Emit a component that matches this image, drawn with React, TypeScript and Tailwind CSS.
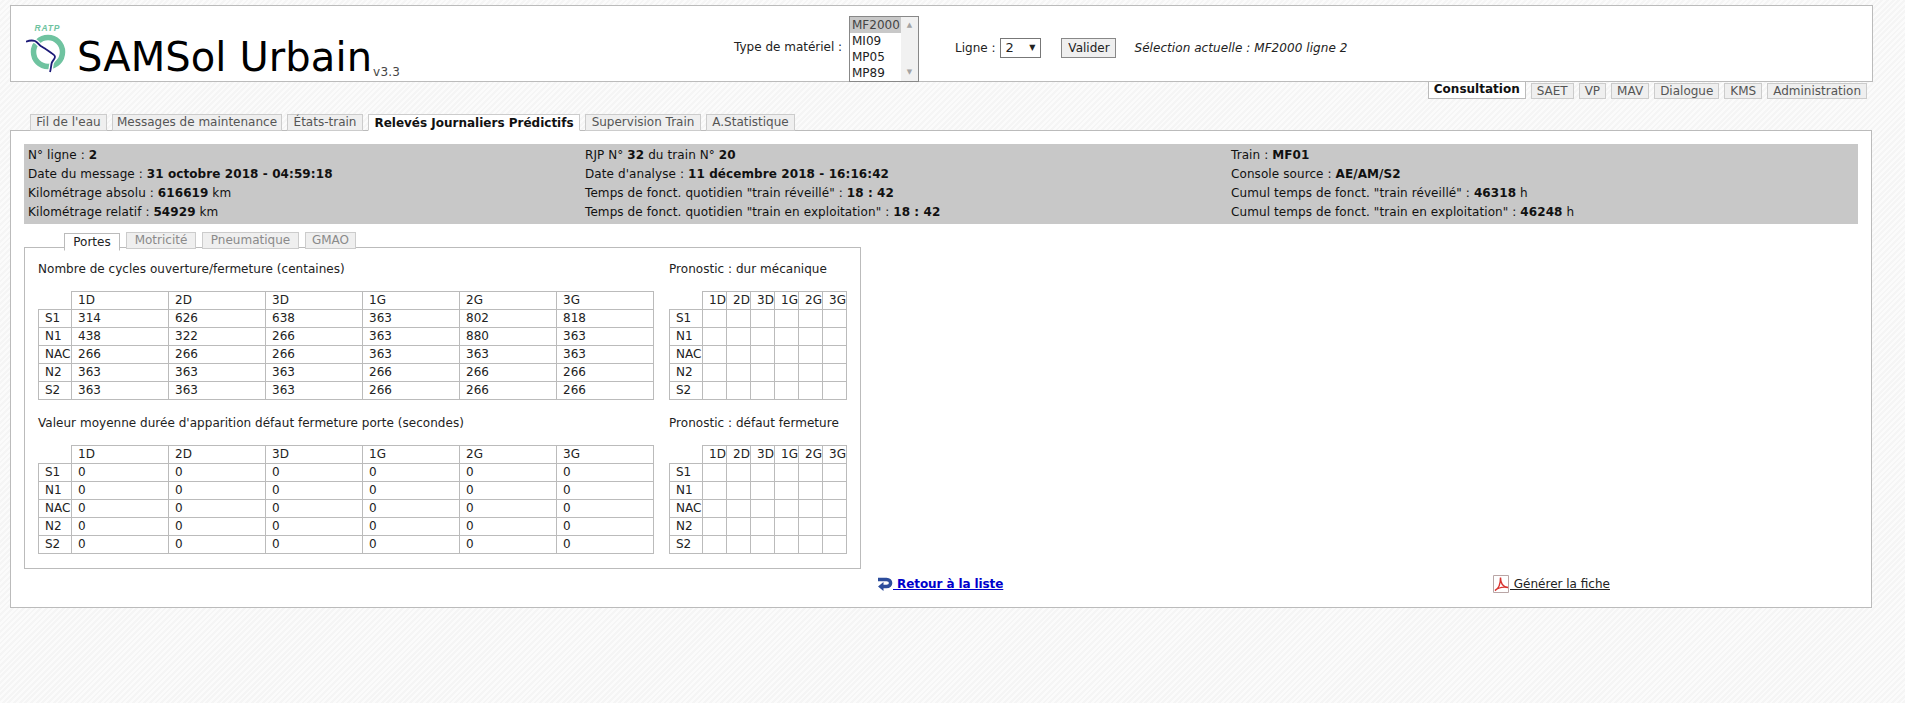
import type { ReactNode } from 'react'

const cols = ['1D', '2D', '3D', '1G', '2G', '3G']
const rows = ['S1', 'N1', 'NAC', 'N2', 'S2']

const cycles = [
  ['314', '626', '638', '363', '802', '818'],
  ['438', '322', '266', '363', '880', '363'],
  ['266', '266', '266', '363', '363', '363'],
  ['363', '363', '363', '266', '266', '266'],
  ['363', '363', '363', '266', '266', '266'],
]
const zeros = rows.map(() => cols.map(() => '0'))
const empty = rows.map(() => cols.map(() => ''))

const topTabs = ['SAET', 'VP', 'MAV', 'Dialogue', 'KMS', 'Administration']

function GridTable({ data, colWidth }: { data: string[][]; colWidth: 'wide' | 'narrow' }) {
  const cellWidth = colWidth === 'wide' ? 'w-[97px]' : 'w-[24px]'
  return (
    <table className={`table-fixed border-collapse ${colWidth === 'wide' ? 'w-[615px]' : 'w-[177px]'}`}>
      <thead>
        <tr className="h-[18px]">
          <th className="w-[33px] p-0" />
          {cols.map((c) => (
            <th key={c} className={`${cellWidth} border border-[#bbb] pl-[6px] py-0 pr-0 text-left font-normal leading-[17px] overflow-visible whitespace-nowrap`}>
              {c}
            </th>
          ))}
        </tr>
      </thead>
      <tbody>
        {rows.map((r, i) => (
          <tr key={r} className="h-[18px]">
            <td className="border border-[#bbb] pl-[6px] py-0 pr-0 leading-[17px] whitespace-nowrap">{r}</td>
            {data[i].map((v, j) => (
              <td key={j} className="border border-[#bbb] pl-[6px] py-0 pr-0 leading-[17px]">
                {v}
              </td>
            ))}
          </tr>
        ))}
      </tbody>
    </table>
  )
}

function Section({ title, children }: { title: string; children: ReactNode }) {
  return (
    <div>
      <div className="h-[18px] leading-[20px] mb-[14px] whitespace-nowrap tracking-[0.03px]">{title}</div>
      {children}
    </div>
  )
}

function RatpLogo() {
  return (
    <svg width="42" height="50" viewBox="0 0 42 50" className="shrink-0">
      <text x="8.5" y="7" fontFamily="'Liberation Sans', sans-serif" fontSize="8.5" fontWeight="700" fontStyle="italic" fill="#6fc3a0" letterSpacing="0.8">
        RATP
      </text>
      <circle cx="22" cy="28" r="14.5" fill="none" stroke="#6fc3a0" strokeWidth="5.5" />
      <path
        d="M0 17.7 C3 16.5 6 16 9 17 C12 18.5 13 21 14.7 22 C17 23.5 18 24 20 25.3 C22 26.5 24 28 25.7 29.3 C27.5 30.5 29 31 29 32.7 C29 35 26.5 36.5 25.7 39 C25 42 25 45 24 48"
        fill="none"
        stroke="#fff"
        strokeWidth="4.5"
      />
      <path
        d="M0 17.7 C3 16.5 6 16 9 17 C12 18.5 13 21 14.7 22 C17 23.5 18 24 20 25.3 C22 26.5 24 28 25.7 29.3 C27.5 30.5 29 31 29 32.7 C29 35 26.5 36.5 25.7 39 C25 42 25 45 24 48"
        fill="none"
        stroke="#1c1a78"
        strokeWidth="1.8"
      />
    </svg>
  )
}

function BackIcon() {
  return (
    <svg width="16" height="14" viewBox="0 0 16 14" className="shrink-0">
      <path d="M1 2.5 H9.5 C15 2.5 15 9.5 9.5 9.5 H5" fill="none" stroke="#2c4d9c" strokeWidth="3.4" />
      <path d="M6.5 5 L1 9.5 L6.5 14 Z" fill="#2c4d9c" />
    </svg>
  )
}

function PdfIcon() {
  return (
    <svg width="17" height="18" viewBox="0 0 17 18" className="shrink-0">
      <path d="M0.5 0.5 H15.5 V17.5 H0.5 Z" fill="#fff" stroke="#b9a6a6" />
      <path d="M2 15.5 C5 14 7.5 9 7.5 2.5 C7.5 8 10 12 15 12.5 C10 11.5 5 13 2 15.5 Z" fill="none" stroke="#d8322e" strokeWidth="1.4" />
    </svg>
  )
}

export default function App() {
  return (
    <div
      className="min-h-[703px] overflow-hidden pt-[5px] pl-[10px] text-[12px] text-[#222] bg-[repeating-linear-gradient(135deg,#fbfbfb_0,#fbfbfb_2px,#f5f5f5_2px,#f5f5f5_4px)]"
      style={{ fontFamily: "'DejaVu Sans', Verdana, sans-serif" }}
    >
      {/* header */}
      <header className="flex w-[1863px] h-[77px] bg-white border border-[#bbb]">
        <div className="flex w-[723px] shrink-0 items-end pl-[15px] pb-[7px]">
          <RatpLogo />
          <span className="ml-[9px] text-[40px] tracking-[0.1px] leading-[46px] text-black whitespace-nowrap -mb-[6px]">SAMSol Urbain</span>
          <span className="ml-[1px] text-[12px] tracking-[0.2px] leading-[14px] text-[#444] -mb-[5px]">v3.3</span>
        </div>
        <div className="flex items-center h-[60px] whitespace-nowrap w-[115px] shrink-0 pt-[1px] mt-[10px]">Type de matériel :</div>
        <div className="flex self-end w-[70px] h-[66px] mt-auto border border-[#888] bg-white -mb-px text-[12px] leading-[16px] shrink-0">
          <div className="flex-1 pl-[2px]">
            <div className="bg-[#c8c8c8] text-[#444] -ml-[2px] pl-[2px]">MF2000</div>
            <div>MI09</div>
            <div>MP05</div>
            <div>MP89</div>
          </div>
          <div className="flex flex-col items-center justify-between w-[17px] bg-[#f1f1f1] py-[4px] text-[7px] leading-[9px] text-[#a3a3a3]">
            <span>▲</span>
            <span>▼</span>
          </div>
        </div>
        <div className="flex items-center h-[60px] mt-[12px] ml-[36px] whitespace-nowrap">
          <span>Ligne :</span>
          <div className="flex items-center justify-between ml-[5px] w-[41px] h-[20px] border border-[#777] pl-[4px] pr-[5px] text-[13px]">
            <span>2</span>
            <span className="text-[8px]">▼</span>
          </div>
          <div className="ml-[20px] flex items-center justify-center w-[55px] h-[20px] border border-[#888] bg-[#efefef]">Valider</div>
          <span className="ml-[18px] italic tracking-[0.06px]">Sélection actuelle : MF2000 ligne 2</span>
        </div>
      </header>

      {/* top navigation */}
      <nav className="flex justify-end items-start w-[1857px] gap-[5px] -mt-px relative">
        <div className="h-[18px] px-[5px] leading-[15px] font-bold text-[#111] bg-white border border-[#bbb]">Consultation</div>
        {topTabs.map((t) => (
          <div key={t} className="mt-[2px] h-[16px] px-[5px] leading-[15px] text-[#555] bg-[#efefef] border border-[#ccc]">
            {t}
          </div>
        ))}
      </nav>

      {/* main tabs */}
      <nav className="flex items-end gap-[5px] pl-[20px] mt-[15px] -mb-px relative h-[17px] text-center">
        <div className="w-[77px] h-[17px] leading-[15px] text-[#555] bg-[#efefef] border border-[#ccc]">Fil de l'eau</div>
        <div className="w-[170px] h-[17px] leading-[15px] text-[#555] bg-[#efefef] border border-[#ccc]">Messages de maintenance</div>
        <div className="w-[76px] h-[17px] leading-[15px] text-[#555] bg-[#efefef] border border-[#ccc]">États-train</div>
        <div className="w-[212px] h-[17px] leading-[16px] font-bold text-[#111] bg-white border border-[#ccc] border-b-white">Relevés Journaliers Prédictifs</div>
        <div className="w-[116px] h-[17px] leading-[15px] text-[#555] bg-[#efefef] border border-[#ccc]">Supervision Train</div>
        <div className="w-[89px] h-[17px] leading-[15px] text-[#555] bg-[#efefef] border border-[#ccc]">A.Statistique</div>
      </nav>

      {/* main panel */}
      <main className="w-[1862px] h-[478px] bg-white border border-[#bbb] pt-[13px] pl-[13px]">
        <section className="grid grid-cols-[557px_646px_1fr] w-[1834px] h-[80px] bg-[#c8c8c8] pt-[2px] pl-[4px] leading-[19px] tracking-[0.09px] text-[#111] whitespace-nowrap">
          <div>
            <div>N° ligne : <b>2</b></div>
            <div>Date du message : <b>31 octobre 2018 - 04:59:18</b></div>
            <div>Kilométrage absolu : <b>616619</b> km</div>
            <div>Kilométrage relatif : <b>54929</b> km</div>
          </div>
          <div>
            <div>RJP N° <b>32</b> du train N° <b>20</b></div>
            <div>Date d'analyse : <b>11 décembre 2018 - 16:16:42</b></div>
            <div>Temps de fonct. quotidien "train réveillé" : <b>18 : 42</b></div>
            <div>Temps de fonct. quotidien "train en exploitation" : <b>18 : 42</b></div>
          </div>
          <div>
            <div>Train : <b>MF01</b></div>
            <div>Console source : <b>AE/AM/S2</b></div>
            <div>Cumul temps de fonct. "train réveillé" : <b>46318</b> h</div>
            <div>Cumul temps de fonct. "train en exploitation" : <b>46248</b> h</div>
          </div>
        </section>

        {/* inner tabs */}
        <div className="flex items-start gap-[6px] pl-[40px] mt-[8px] -mb-[2px] h-[17px] relative text-center">
          <div className="mt-px h-[18px] w-[56px] leading-[17px] bg-white border border-[#bbb] border-b-white text-[#222]">Portes</div>
          <div className="w-[70px] h-[17px] leading-[15px] text-[#8a8a8a] bg-[#efefef] border border-[#ccc]">Motricité</div>
          <div className="w-[97px] h-[17px] leading-[15px] text-[#8a8a8a] bg-[#efefef] border border-[#ccc]">Pneumatique</div>
          <div className="w-[51px] h-[17px] leading-[15px] text-[#8a8a8a] bg-[#efefef] border border-[#ccc]">GMAO</div>
        </div>

        <div className="w-[837px] h-[322px] border border-[#bbb] pl-[13px] pt-[11px]">
          <div className="grid grid-cols-[631px_177px] gap-y-[13px]">
            <Section title="Nombre de cycles ouverture/fermeture (centaines)">
              <GridTable data={cycles} colWidth="wide" />
            </Section>
            <Section title="Pronostic : dur mécanique">
              <GridTable data={empty} colWidth="narrow" />
            </Section>
            <Section title="Valeur moyenne durée d'apparition défaut fermeture porte (secondes)">
              <GridTable data={zeros} colWidth="wide" />
            </Section>
            <Section title="Pronostic : défaut fermeture">
              <GridTable data={empty} colWidth="narrow" />
            </Section>
          </div>
        </div>

        <div className="flex items-center h-[16px] mt-[7px]">
          <a className="flex items-center ml-[853px] w-[616px] font-bold text-[#0000cc]">
            <BackIcon />
            <span className="underline whitespace-pre tracking-[-0.1px]"> Retour à la liste</span>
          </a>
          <a className="flex items-center text-[#222]">
            <PdfIcon />
            <span className="underline whitespace-pre"> Générer la fiche</span>
          </a>
        </div>
      </main>
    </div>
  )
}
